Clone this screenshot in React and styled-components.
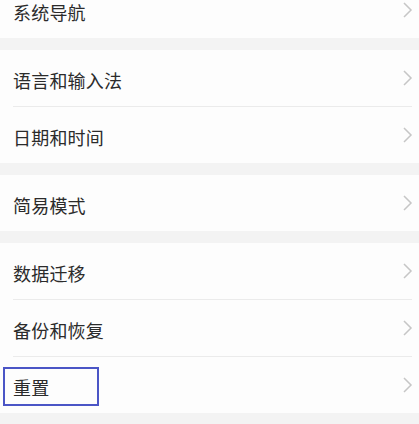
import React from "react";
import styled, { createGlobalStyle } from "styled-components";

const GlobalStyle = createGlobalStyle`
    html, body {
        margin: 0;
        padding: 0;
        background: #f3f3f3;
        overflow: hidden;
    }
    body {
        font-family: "Noto Sans CJK SC", "Noto Sans", sans-serif;
    }
`;

const Page = styled.div`
    display: flex;
    flex-direction: column;
    gap: 12px;
    margin-top: -18px;
    width: 419px;
    height: 442px;
    background: #f3f3f3;
`;

const Group = styled.div`
    display: flex;
    flex-direction: column;
    background: #fdfdfd;
`;

const Row = styled.div`
    position: relative;
    display: flex;
    align-items: center;
    justify-content: space-between;
    height: 56px;
    padding: 0 6px 0 13px;
    border-top: ${(p) => (p.divided ? "1px solid transparent" : "none")};

    &::before {
        content: "";
        display: ${(p) => (p.divided ? "block" : "none")};
        position: absolute;
        top: -1px;
        left: 13px;
        right: 7px;
        height: 1px;
        background: #ebebeb;
    }
`;

const Label = styled.span`
    font-size: 18px;
    line-height: 20px;
    color: #2b2b2b;
    padding-top: 4px;
    letter-spacing: 0.2px;
`;

const Highlight = styled.div`
    position: absolute;
    left: 3px;
    top: 10px;
    width: 92px;
    height: 35px;
    border: 2px solid #4b55c6;
`;

const Chevron = () => (
    <svg width="12" height="18" viewBox="0 0 12 18">
        <path d="M3 2 L10 9 L3 16" fill="none" stroke="#c6c6c6" strokeWidth="1.5" />
    </svg>
);

const groups = [
    ["系统导航"],
    ["语言和输入法", "日期和时间"],
    ["简易模式"],
    ["数据迁移", "备份和恢复", "重置"],
];

const App = () => {
    return (
        <>
            <GlobalStyle />
            <Page>
                {groups.map((items, gi) => (
                    <Group key={gi}>
                        {items.map((label, i) => (
                            <Row key={label} divided={i > 0}>
                                <Label>{label}</Label>
                                {label === "重置" && <Highlight />}
                                <Chevron />
                            </Row>
                        ))}
                    </Group>
                ))}
            </Page>
        </>
    );
};

export default App;
